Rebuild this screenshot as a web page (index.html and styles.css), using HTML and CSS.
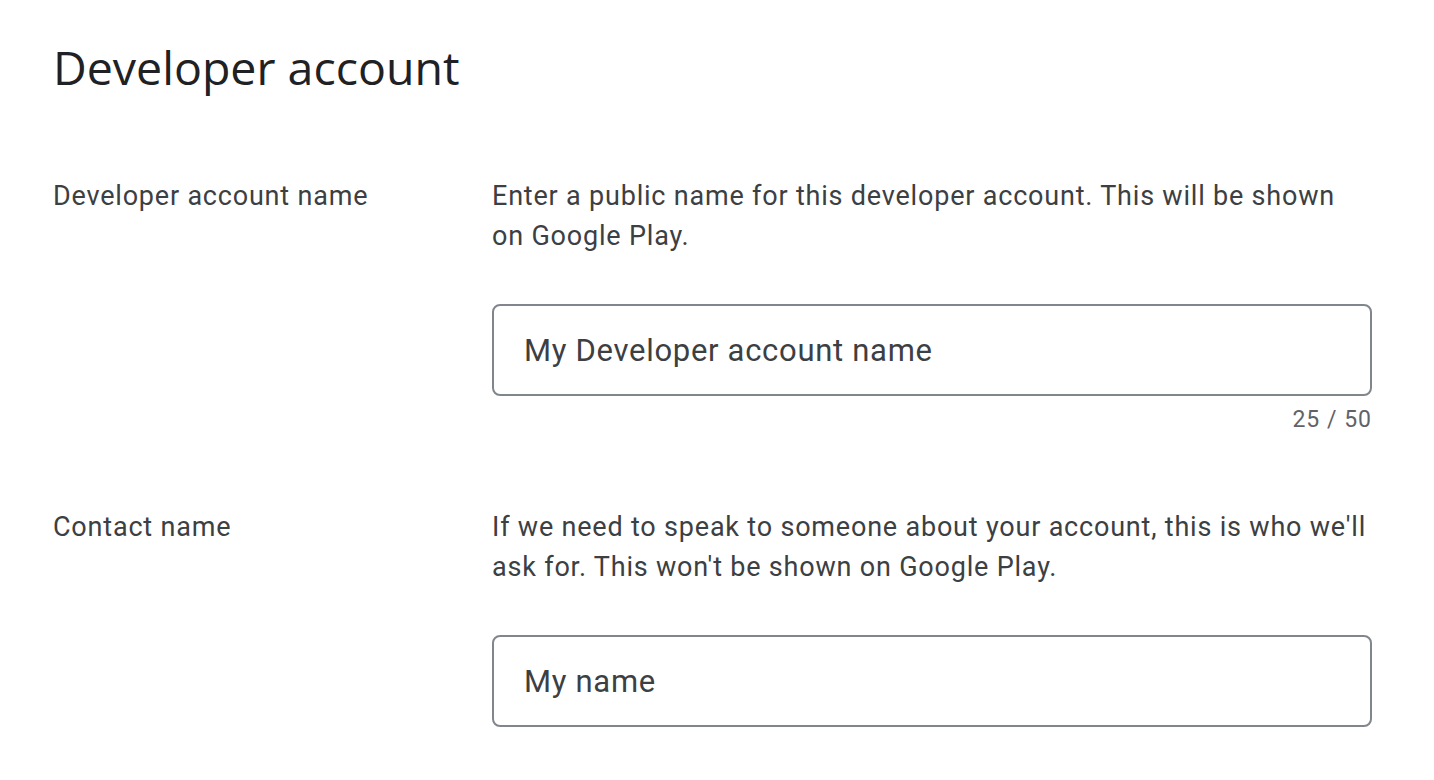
FILE: index.html
```html
<!DOCTYPE html>
<html lang="en">
<head>
<meta charset="utf-8">
<title>Developer account</title>
<link rel="stylesheet" href="styles.css">
</head>
<body>
<main class="page">
  <h1 class="title">Developer account</h1>
  <section class="row">
    <div class="label">Developer account name</div>
    <div class="field">
      <p class="desc">Enter a public name for this developer account. This will be shown on Google Play.</p>
      <div class="input">My Developer account name</div>
      <div class="counter">25 / 50</div>
    </div>
  </section>
  <section class="row row-second">
    <div class="label">Contact name</div>
    <div class="field">
      <p class="desc">If we need to speak to someone about your account, this is who we'll ask for. This won't be shown on Google Play.</p>
      <div class="input">My name</div>
    </div>
  </section>
</main>
</body>
</html>
```
FILE: styles.css
```css
html, body {
  margin: 0;
  padding: 0;
  background: #ffffff;
}
body {
  font-family: Roboto, "Liberation Sans", sans-serif;
  color: #3c4043;
  overflow: hidden;
}
.page {
  padding: 37px 62px 0 53px;
}
.title {
  margin: 0;
  font-family: "Open Sans", Roboto, sans-serif;
  font-weight: 400;
  font-size: 46.5px;
  line-height: 60px;
  color: #202124;
}
.row {
  display: grid;
  grid-template-columns: 439px 1fr;
  margin-top: 79px;
}
.row-second {
  margin-top: 71px;
}
.label {
  font-size: 27px;
  line-height: 40px;
  letter-spacing: 0.8px;
}
.desc {
  margin: 0;
  font-size: 27px;
  line-height: 40px;
  letter-spacing: 0.8px;
}
.input {
  margin-top: 48px;
  height: 88px;
  border: 2px solid #80868b;
  border-radius: 8px;
  display: flex;
  align-items: center;
  padding-left: 30px;
  font-size: 31px;
  letter-spacing: 0.7px;
  color: #3c4043;
}
.counter {
  text-align: right;
  font-size: 23px;
  line-height: 32px;
  margin-top: 8px;
  color: #5f6368;
  letter-spacing: 1px;
}
```
